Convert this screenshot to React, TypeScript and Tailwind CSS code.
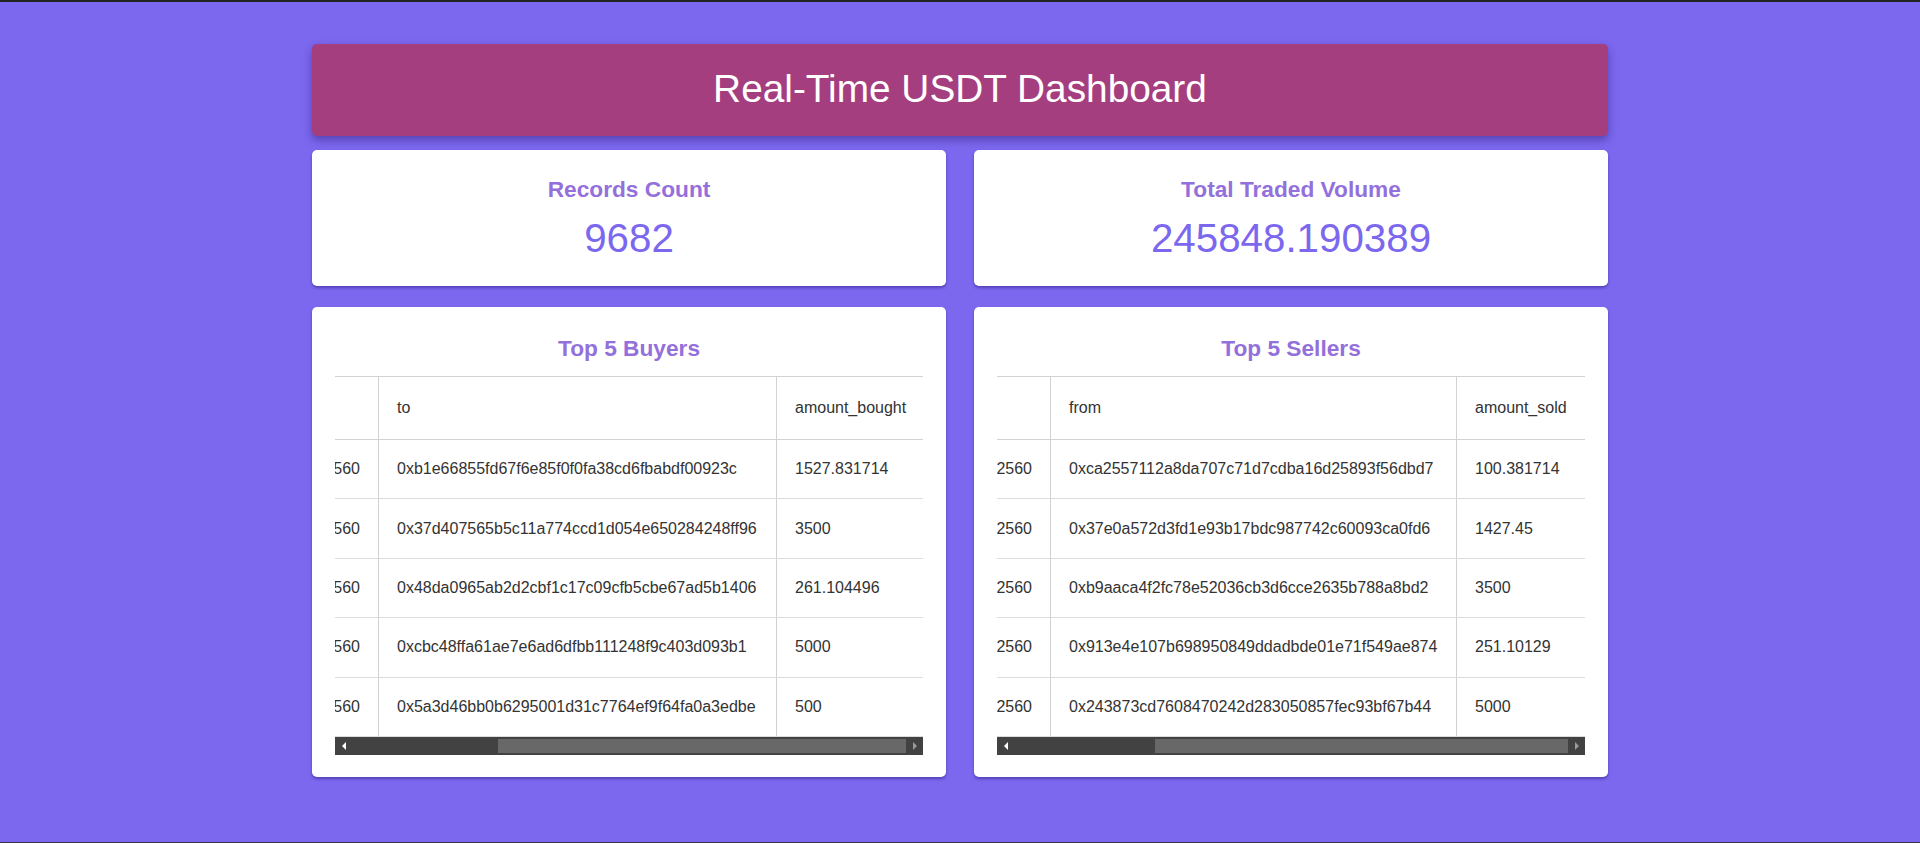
import React from 'react'

type Row = { ts: string; address: string; amount: string }

const buyers: Row[] = [
    { ts: '1701302560', address: '0xb1e66855fd67f6e85f0f0fa38cd6fbabdf00923c', amount: '1527.831714' },
    { ts: '1701302560', address: '0x37d407565b5c11a774ccd1d054e650284248ff96', amount: '3500' },
    { ts: '1701302560', address: '0x48da0965ab2d2cbf1c17c09cfb5cbe67ad5b1406', amount: '261.104496' },
    { ts: '1701302560', address: '0xcbc48ffa61ae7e6ad6dfbb111248f9c403d093b1', amount: '5000' },
    { ts: '1701302560', address: '0x5a3d46bb0b6295001d31c7764ef9f64fa0a3edbe', amount: '500' },
]

const sellers: Row[] = [
    { ts: '1701302560', address: '0xca2557112a8da707c71d7cdba16d25893f56dbd7', amount: '100.381714' },
    { ts: '1701302560', address: '0x37e0a572d3fd1e93b17bdc987742c60093ca0fd6', amount: '1427.45' },
    { ts: '1701302560', address: '0xb9aaca4f2fc78e52036cb3d6cce2635b788a8bd2', amount: '3500' },
    { ts: '1701302560', address: '0x913e4e107b698950849ddadbde01e71f549ae874', amount: '251.10129' },
    { ts: '1701302560', address: '0x243873cd7608470242d283050857fec93bf67b44', amount: '5000' },
]

const StatCard = ({ title, value }: { title: string; value: string }) => (
    <div className="bg-white rounded-[5px] shadow-[0_2px_3px_rgba(40,20,120,0.45)] pt-[27px] pb-[25px] flex flex-col items-center">
        <h3 className="text-[22.7px] leading-[25px] font-bold text-[#9370db]">{title}</h3>
        <p className="mt-[14px] text-[40.3px] leading-[45px] text-[#7b68ee]">{value}</p>
    </div>
)

// fake horizontal scrollbar, always scrolled to the far right
const ScrollBar = ({ kind }: { kind: 'buyers' | 'sellers' }) => (
    <div className="flex h-[18px] bg-[#424242]">
        <div className="w-[17px] flex items-center justify-center">
            <span className="w-0 h-0 border-y-[4px] border-y-transparent border-r-[4px] border-r-white" />
        </div>
        <div className="flex-1 flex py-[2px]">
            <div className={`flex-1 bg-[#686868] ${kind === 'buyers' ? 'ml-[146px]' : 'ml-[141px]'}`} />
        </div>
        <div className="w-[17px] flex items-center justify-center">
            <span className="w-0 h-0 border-y-[4px] border-y-transparent border-l-[4px] border-l-[#9a9a9a]" />
        </div>
    </div>
)

const TopTable = ({
    title,
    column,
    amountLabel,
    rows,
    kind
}: {
    title: string
    column: string
    amountLabel: string
    rows: Row[]
    kind: 'buyers' | 'sellers'
}) => {
    const isBuyers = kind === 'buyers'
    return (
        <div className="bg-white rounded-[5px] shadow-[0_2px_3px_rgba(40,20,120,0.45)] px-[23px] pt-[29px] pb-[22px]">
            <h3 className="text-center text-[22.7px] leading-[25px] font-bold text-[#9370db]">{title}</h3>

            <div className="mt-[15px] overflow-hidden">
                <table
                    className={`table-fixed border-collapse text-[16px] text-[#333] ${
                        isBuyers ? 'w-[799px] ml-[-210px]' : 'w-[790px] ml-[-202px]'
                    }`}
                >
                    <colgroup>
                        <col className={isBuyers ? 'w-[253px]' : 'w-[255px]'} />
                        <col className={isBuyers ? 'w-[398px]' : 'w-[406px]'} />
                        <col className={isBuyers ? 'w-[148px]' : 'w-[129px]'} />
                    </colgroup>
                    <thead>
                        <tr>
                            <th className="border border-[#d3d3d3] px-[18px] h-[63px]" />
                            <th className="border border-[#d3d3d3] px-[18px] h-[63px] font-normal text-left leading-[18px]">{column}</th>
                            <th className="border border-[#d3d3d3] px-[18px] h-[63px] font-normal text-left leading-[18px] whitespace-nowrap">{amountLabel}</th>
                        </tr>
                    </thead>
                    <tbody>
                        {rows.map((r, i) => (
                            <tr key={i}>
                                <td className="border border-[#dcdcdc] border-r-[#d0d0d0] px-[18px] h-[59.4px] text-right leading-[18px]">{r.ts}</td>
                                <td className="border border-[#dcdcdc] border-x-[#d0d0d0] px-[18px] h-[59.4px] leading-[18px] whitespace-nowrap">{r.address}</td>
                                <td className="border border-[#dcdcdc] border-l-[#d0d0d0] px-[18px] h-[59.4px] leading-[18px]">{r.amount}</td>
                            </tr>
                        ))}
                    </tbody>
                </table>
            </div>

            <ScrollBar kind={kind} />
        </div>
    )
}

export default function App() {
    return (
        <div
            className="min-h-screen bg-[#7b68ee] border-t-2 border-t-[#232323] border-b border-b-[#3b2f4a]"
            style={{ fontFamily: '"Liberation Sans", Arial, sans-serif' }}
        >
            <div className="w-[1296px] mx-auto pt-[42px] pb-[64px]">

                {/* HEADER */}
                <header className="bg-[#a53e7f] rounded-[5px] shadow-[0_4px_8px_rgba(40,20,110,0.45)] pt-[23px] pb-[26px] text-center">
                    <h1 className="text-[38.8px] leading-[43px] text-white">Real-Time USDT Dashboard</h1>
                </header>

                {/* STATS */}
                <div className="mt-[14px] grid grid-cols-2 gap-[28px]">
                    <StatCard title="Records Count" value="9682" />
                    <StatCard title="Total Traded Volume" value="245848.190389" />
                </div>

                {/* TABLES */}
                <div className="mt-[21px] grid grid-cols-2 gap-[28px]">
                    <TopTable title="Top 5 Buyers" column="to" amountLabel="amount_bought" rows={buyers} kind="buyers" />
                    <TopTable title="Top 5 Sellers" column="from" amountLabel="amount_sold" rows={sellers} kind="sellers" />
                </div>
            </div>
        </div>
    )
}
